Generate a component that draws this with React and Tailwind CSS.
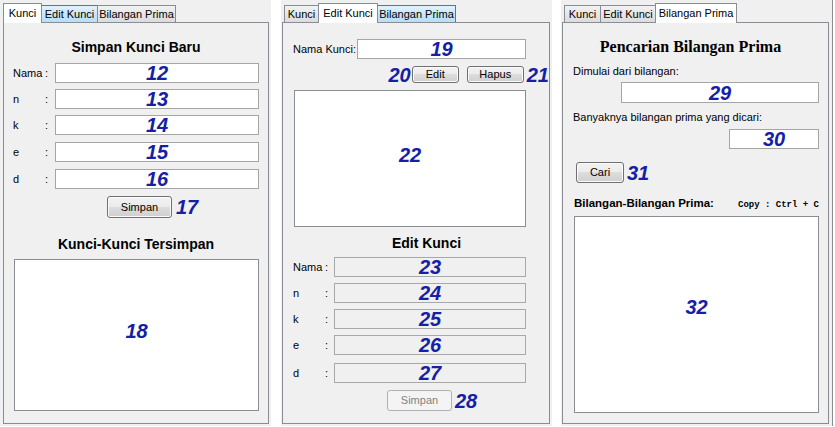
import React from 'react';

const NUM = "font-['Liberation_Sans',sans-serif] font-bold italic text-[20px] leading-none text-[#1420a6]";

function Num({ children, className = '' }) {
  return <span className={`${NUM} ${className}`}>{children}</span>;
}

function Tab({ label, w, state, first }) {
  if (state === 'sel') {
    return (
      <div
        className={`relative z-10 h-[20px] mb-[-1px] bg-white border border-b-0 border-[#898c95] flex justify-center pt-[3px] ${first ? '' : 'ml-[-1px]'}`}
        style={{ width: w }}
      >
        {label}
      </div>
    );
  }
  const look =
    state === 'hover'
      ? 'bg-[linear-gradient(#e3f2fc,#c8e6f9_50%,#b9def6)] border-[#3c7fb1]'
      : 'bg-[linear-gradient(#f2f2f2,#e6e6e6_50%,#dcdcdc)] border-[#898c95]';
  return (
    <div
      className={`relative h-[17px] border border-b-0 ${look} flex justify-center pt-[2px] ${first ? '' : 'ml-[-1px]'}`}
      style={{ width: w }}
    >
      {label}
    </div>
  );
}

function Btn({ children, w, h, disabled }) {
  return (
    <div
      className={
        disabled
          ? 'flex items-center justify-center rounded-[3px] border border-[#adb2b5] bg-[#f4f4f4] text-[#838383]'
          : 'flex items-center justify-center rounded-[3px] border border-[#707070] bg-[linear-gradient(#f2f2f2,#ebebeb_50%,#dddddd_50%,#cfcfcf)] shadow-[inset_0_0_0_1px_#fbfbfb]'
      }
      style={{ width: w, height: h }}
    >
      {children}
    </div>
  );
}

function Field({ w, h = 20, n, disabled }) {
  return (
    <div
      className={`flex items-center justify-center border ${disabled ? 'bg-[#f0f0f0] border-[#a8a8a8]' : 'bg-white border-[#a5a5a5]'}`}
      style={{ width: w, height: h }}
    >
      {n && <Num>{n}</Num>}
    </div>
  );
}

function Row({ label, n, mt, labelW, colonW, fieldW, disabled, pl }) {
  return (
    <div className="flex items-center" style={{ marginTop: mt, paddingLeft: pl }}>
      <span style={{ width: labelW }}>{label}</span>
      <span style={{ width: colonW }}>:</span>
      <Field w={fieldW} n={n} disabled={disabled} />
    </div>
  );
}

export default function App() {
  return (
    <div className="flex w-[835px] h-[427px] bg-white font-['Liberation_Sans',sans-serif] text-[11px] leading-[13px] text-black">
      {/* Tab Kunci */}
      <div className="w-[271px] h-[426px] bg-[#f0f0f0] pl-[3px] pr-[2px] pt-[3px] pb-[2px] flex flex-col">
        <div className="flex items-end h-[19px]">
          <Tab label="Kunci" w={39} state="sel" first />
          <Tab label="Edit Kunci" w={57} state="hover" />
          <Tab label="Bilangan Prima" w={79} state="norm" />
        </div>
        <div className="flex-1 border border-[#898c95] flex flex-col">
          <div className="mt-[16px] text-center font-bold text-[14px] leading-[17px]">Simpan Kunci Baru</div>
          <Row label="Nama" n="12" mt={7} pl={9} labelW={32} colonW={10} fieldW={204} />
          <Row label="n" n="13" mt={6} pl={9} labelW={32} colonW={10} fieldW={204} />
          <Row label="k" n="14" mt={6} pl={9} labelW={32} colonW={10} fieldW={204} />
          <Row label="e" n="15" mt={7} pl={9} labelW={32} colonW={10} fieldW={204} />
          <Row label="d" n="16" mt={7} pl={9} labelW={32} colonW={10} fieldW={204} />
          <div className="flex items-center mt-[7px] pl-[103px]">
            <Btn w={65} h={22}>Simpan</Btn>
            <Num className="ml-[4px]">17</Num>
          </div>
          <div className="mt-[18px] text-center font-bold text-[14px] leading-[17px]">Kunci-Kunci Tersimpan</div>
          <div className="mt-[6px] ml-[10px] w-[245px] h-[152px] pb-[8px] bg-white border border-[#8a8d95] flex items-center justify-center">
            <Num>18</Num>
          </div>
        </div>
      </div>

      {/* Tab Edit Kunci */}
      <div className="ml-[10px] w-[271px] h-[426px] bg-[#f0f0f0] pl-[1px] pr-[2px] pt-[3px] pb-[2px] flex flex-col">
        <div className="flex items-end h-[19px] pl-[2px]">
          <Tab label="Kunci" w={35} state="norm" first />
          <Tab label="Edit Kunci" w={60} state="sel" />
          <Tab label="Bilangan Prima" w={79} state="hover" />
        </div>
        <div className="flex-1 border border-[#898c95] flex flex-col">
          <div className="flex items-center mt-[16px] pl-[10px]">
            <span className="w-[64px]">Nama Kunci:</span>
            <Field w={169} n="19" />
          </div>
          <div className="flex items-center h-[17px] mt-[7px] pl-[104px]">
            <Num className="w-[24px] text-right">20</Num>
            <div className="ml-[1px]"><Btn w={47} h={17}>Edit</Btn></div>
            <div className="ml-[8px]"><Btn w={57} h={17}>Hapus</Btn></div>
            <Num className="ml-[3px]">21</Num>
          </div>
          <div className="mt-[7px] ml-[11px] w-[232px] h-[137px] pb-[8px] bg-white border border-[#8a8d95] flex items-center justify-center">
            <Num>22</Num>
          </div>
          <div className="mt-[8px] ml-[11px] w-[265px] text-center font-bold text-[14px] leading-[17px]">Edit Kunci</div>
          <Row label="Nama" n="23" mt={5} pl={10} labelW={32} colonW={9} fieldW={192} disabled />
          <Row label="n" n="24" mt={6} pl={10} labelW={32} colonW={9} fieldW={192} disabled />
          <Row label="k" n="25" mt={6} pl={10} labelW={32} colonW={9} fieldW={192} disabled />
          <Row label="e" n="26" mt={6} pl={10} labelW={32} colonW={9} fieldW={192} disabled />
          <Row label="d" n="27" mt={8} pl={10} labelW={32} colonW={9} fieldW={192} disabled />
          <div className="flex items-center mt-[7px] pl-[104px]">
            <Btn w={65} h={21} disabled>Simpan</Btn>
            <Num className="ml-[3px]">28</Num>
          </div>
        </div>
      </div>

      {/* Tab Bilangan Prima */}
      <div className="ml-[9px] w-[272px] h-[426px] bg-[#f0f0f0] pl-[1px] pr-[3px] pt-[3px] pb-[2px] border-r border-[#898c95] flex flex-col">
        <div className="flex items-end h-[19px] pl-[2px]">
          <Tab label="Kunci" w={37} state="norm" first />
          <Tab label="Edit Kunci" w={56} state="norm" />
          <Tab label="Bilangan Prima" w={82} state="sel" />
        </div>
        <div className="flex-1 border border-[#898c95] flex flex-col">
          <div className="mt-[15px] w-[255px] text-center font-['Liberation_Serif',serif] font-bold text-[16px] leading-[18px]">
            Pencarian Bilangan Prima
          </div>
          <div className="mt-[9px] pl-[10px]">Dimulai dari bilangan:</div>
          <div className="mt-[4px] pl-[58px]">
            <Field w={198} h={21} n="29" />
          </div>
          <div className="mt-[8px] pl-[10px]">Banyaknya bilangan prima yang dicari:</div>
          <div className="mt-[5px] pl-[166px]">
            <Field w={90} n="30" />
          </div>
          <div className="flex items-center mt-[13px] pl-[13px]">
            <Btn w={48} h={21}>Cari</Btn>
            <Num className="ml-[3px]">31</Num>
          </div>
          <div className="flex items-baseline justify-between mt-[13px] pl-[11px] pr-[9px]">
            <span className="font-bold text-[11.5px] leading-[15px]">Bilangan-Bilangan Prima:</span>
            <span className="font-['Liberation_Mono',monospace] font-bold text-[9px] whitespace-pre">Copy : Ctrl + C</span>
          </div>
          <div className="mt-[4px] ml-[11px] w-[245px] h-[197px] pb-[16px] bg-white border border-[#8a8d95] flex items-center justify-center">
            <Num>32</Num>
          </div>
        </div>
      </div>
    </div>
  );
}
